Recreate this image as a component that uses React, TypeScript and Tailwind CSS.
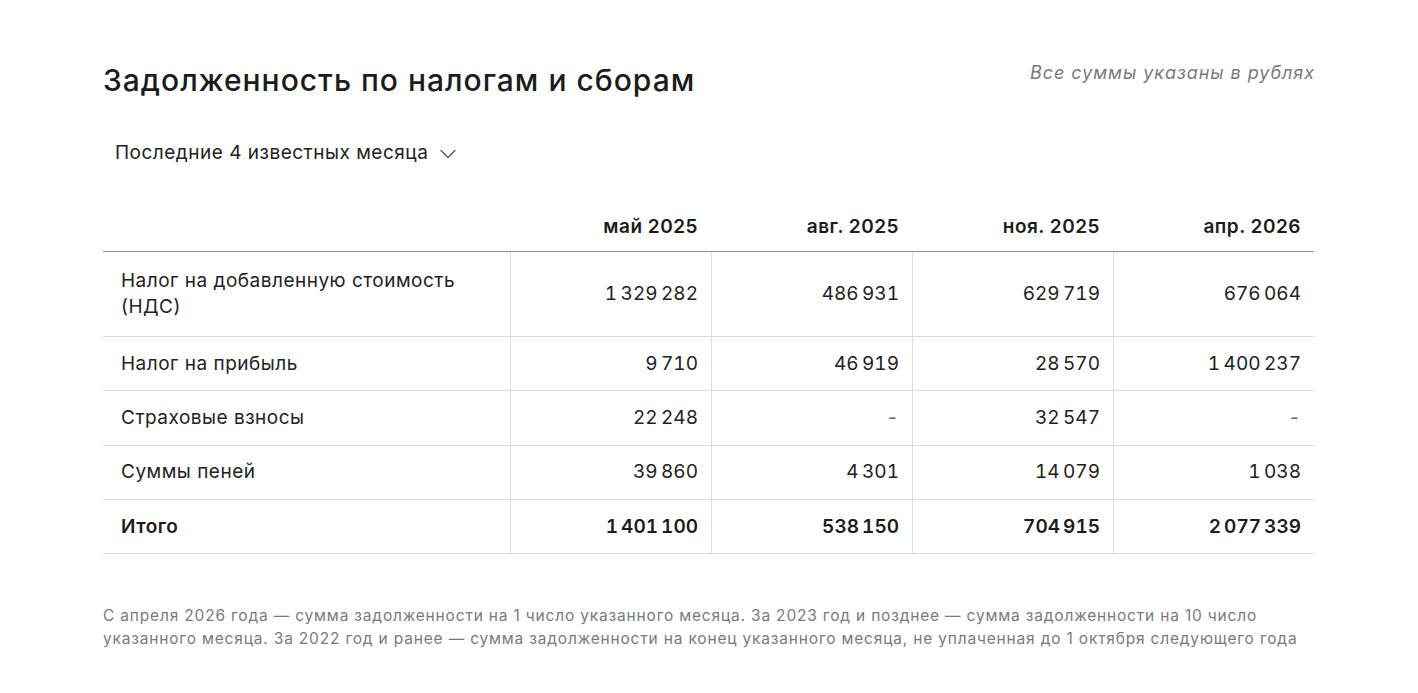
const NB = '\u202F';

type Row = {
  label: string;
  values: string[];
  total?: boolean;
  tall?: boolean;
};

const months = ['май 2025', 'авг. 2025', 'ноя. 2025', 'апр. 2026'];

const rows: Row[] = [
  {
    label: 'Налог на добавленную стоимость (НДС)',
    values: [`1${NB}329${NB}282`, `486${NB}931`, `629${NB}719`, `676${NB}064`],
    tall: true,
  },
  { label: 'Налог на прибыль', values: [`9${NB}710`, `46${NB}919`, `28${NB}570`, `1${NB}400${NB}237`] },
  { label: 'Страховые взносы', values: [`22${NB}248`, '-', `32${NB}547`, '-'] },
  { label: 'Суммы пеней', values: [`39${NB}860`, `4${NB}301`, `14${NB}079`, `1${NB}038`] },
  {
    label: 'Итого',
    values: [`1${NB}401${NB}100`, `538${NB}150`, `704${NB}915`, `2${NB}077${NB}339`],
    total: true,
  },
];

export default function App() {
  return (
    <div
      className="min-h-screen bg-white text-[#222]"
      style={{ fontFamily: 'Inter, "Noto Sans", "Liberation Sans", sans-serif' }}
    >
      <div className="mx-auto w-[1294px] rounded-[20px] bg-white px-[41px] pt-[60px] pb-[40px]">
        {/* Header */}
        <div className="flex items-start justify-between">
          <h1 className="text-[30px] leading-[40px] font-medium tracking-[1px] text-[#1c1c1c]">
            Задолженность по налогам и сборам
          </h1>
          <span className="mt-px text-[18px] leading-[24px] italic tracking-[0.95px] text-[#7a7a7a]">
            Все суммы указаны в рублях
          </span>
        </div>

        <button className="mt-[40px] ml-[12px] flex items-center gap-[12px] text-[19px] leading-[26px] tracking-[0.5px] text-[#222]">
          Последние 4 известных месяца
          <svg width="16" height="10" viewBox="0 0 16 10" fill="none" className="mt-[2px]">
            <path d="M1 1.5L8 8.5L15 1.5" stroke="#555" strokeWidth="1.3" strokeLinecap="round" strokeLinejoin="round" />
          </svg>
        </button>

        {/* Table */}
        <div className="mt-[36px] grid grid-cols-[407px_201px_201px_201px_201px] text-[19px] leading-[26px] tracking-[0.5px]">
          <div className="h-[50px] border-b border-[#8c8c8c]" />
          {months.map((m) => (
            <div
              key={m}
              className="flex h-[50px] items-center justify-end border-b border-[#8c8c8c] pr-[13px] font-semibold text-[#1c1c1c]"
            >
              {m}
            </div>
          ))}

          {rows.map((row) => (
            <div key={row.label} className="contents">
              <div
                className={`flex items-center border-b border-[#dcdcdc] pl-[18px] pr-[40px] ${
                  row.tall ? 'h-[85px]' : 'h-[54.3px]'
                } ${row.total ? 'font-semibold text-[#1c1c1c]' : ''}`}
              >
                {row.label}
              </div>
              {row.values.map((v, i) => (
                <div
                  key={i}
                  className={`flex items-center justify-end border-b border-l border-[#dcdcdc] pr-[13px] tabular-nums ${
                    row.tall ? 'h-[85px]' : 'h-[54.3px]'
                  } ${row.total ? 'font-semibold text-[#1c1c1c]' : ''} ${v === '-' ? 'text-[#666]' : ''}`}
                >
                  {v}
                </div>
              ))}
            </div>
          ))}
        </div>

        <p className="mt-[50px] w-[1200px] text-[15.5px] leading-[23px] tracking-[0.82px] text-[#7a7a7a]">
          С апреля 2026 года — сумма задолженности на 1 число указанного месяца. За 2023 год и позднее — сумма
          задолженности на 10 число указанного месяца. За 2022 год и ранее — сумма задолженности на конец указанного
          месяца, не уплаченная до 1 октября следующего года
        </p>
      </div>
    </div>
  );
}
